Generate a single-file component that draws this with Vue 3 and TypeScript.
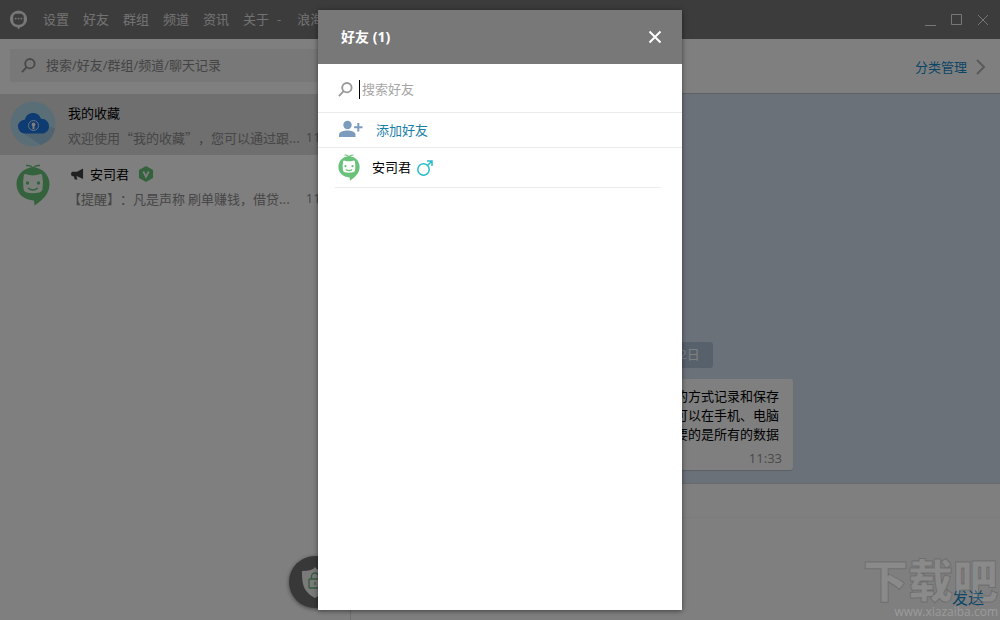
<script setup lang="ts">
import { ref } from 'vue'

interface Chat {
  id: number
  name: string
  preview: string
  time: string
  kind: 'cloud' | 'robot'
  active: boolean
}

const menu: string[] = ['设置', '好友', '群组', '频道', '资讯', '关于']
const chats: Chat[] = [
  { id: 1, name: '我的收藏', preview: '欢迎使用“我的收藏”，您可以通过跟...', time: '11:33', kind: 'cloud', active: true },
  { id: 2, name: '安司君', preview: '【提醒】：凡是声称 刷单赚钱，借贷...', time: '11:33', kind: 'robot', active: false },
]
const message: string[] = [
  '欢迎使用我的收藏，您可以通过跟自己聊天的方式记录和保存',
  '文字、图片、视频和文件等内容，并且可以在手机、电脑',
  '上随时查看，最重要的是所有的数据',
]
const friends: string[] = ['安司君']
const keyword = ref('')
const friendKeyword = ref('')
const draft = ref('')
</script>

<template>
  <div class="app">
    <header class="titlebar">
      <svg class="brand" viewBox="0 0 20 22" aria-hidden="true">
        <path fill="#f0f0f0" fill-rule="evenodd" d="M10 1a9 9 0 0 1 9 9c0 5-4 8.300-7.500 8.800L10 21l-1-2.200C4.500 18.300 1 14.600 1 10a9 9 0 0 1 9-9zM6.800 4.500 4.500 6.500v5.200c0 2.800 2.500 4.300 5.500 4.300s5.500-1.500 5.500-4.300V6.500l-2.300-2z" />
        <g fill="#f0f0f0"><circle cx="7" cy="9.500" r="1" /><circle cx="10" cy="9.500" r="1" /><circle cx="13" cy="9.500" r="1" /></g>
      </svg>
      <nav class="menu">
        <button v-for="item in menu" :key="item" type="button">{{ item }}</button>
      </nav>
      <span class="account"><span>-</span><span>浪海</span></span>
      <div class="window-buttons">
        <button type="button" aria-label="最小化"><svg viewBox="0 0 12 12"><path d="M0 11.500h11" /></svg></button>
        <button type="button" aria-label="最大化"><svg viewBox="0 0 12 12"><path d="M.5.5h10v10H.5z" /></svg></button>
        <button type="button" aria-label="关闭窗口"><svg viewBox="0 0 12 12"><path d="M1 1l10 10M11 1 1 11" /></svg></button>
      </div>
    </header>

    <div class="body">
      <aside class="sidebar">
        <div class="search-wrap">
          <label class="search">
            <svg class="lens" viewBox="0 0 16 16"><circle cx="9.500" cy="6" r="5" /><path d="M6 9.800 1 15" /></svg>
            <input v-model="keyword" type="text" placeholder="搜索/好友/群组/频道/聊天记录" aria-label="搜索" />
          </label>
        </div>
        <ul class="chats">
          <li v-for="chat in chats" :key="chat.id" :class="{ active: chat.active }">
            <svg v-if="chat.kind === 'cloud'" class="avatar" viewBox="0 0 46 46">
              <circle cx="23" cy="23" r="22.500" fill="#b5dcf0" />
              <path fill="#9fc6e0" d="M37 25.500 45.200 27A22.500 22.500 0 0 1 31 44L13 32z" />
              <path fill="#1c77e2" d="M15 32.500a6.800 6.800 0 0 1-7-7c0-4 3.300-6.700 6.800-6.800 1-4 4.200-6.700 8.300-6.700 4 0 6.800 2.300 7.900 5.800 4.800 0 8 3.200 8 7.400 0 4.300-3.200 7.300-7.300 7.300z" />
              <circle cx="23.500" cy="24.500" r="5" fill="none" stroke="#d4e9ff" stroke-width="1" />
              <path fill="#fff" d="M23.500 21.500a2 2 0 0 1 1 3.700v3h-2v-3a2 2 0 0 1 1-3.700z" />
            </svg>
            <svg v-else class="avatar robot" viewBox="0 0 34 42">
              <path fill="none" stroke="#68c578" stroke-width="1.500" d="M10 1.500q6-.5 7 4 1-4.500 7-4" />
              <path fill="#68c578" d="M17 3.500c9 0 16.500 7.200 16.500 16.500 0 8.500-5 15-15 21.500l-.5-5C7.500 36 .5 29.500.5 20 .5 10.700 8 3.500 17 3.500z" />
              <path fill="#f7fff6" d="M9.500 10q7.500 2.800 15 0c1 0 1.500.6 1.700 1.500q1.300 7 .3 13.500c-.3 2-1.500 3.100-3.200 3.500q-6.300 1.500-12.600 0c-1.700-.4-2.900-1.500-3.200-3.500q-1-6.500.3-13.500c.2-.9.700-1.500 1.700-1.500z" />
              <g fill="#68c578"><circle cx="11.500" cy="19" r="1.700" /><circle cx="22.500" cy="19" r="1.700" /></g>
              <path fill="none" stroke="#68c578" stroke-width="1.600" d="M12 24q5 4 10 0" />
            </svg>
            <div class="summary">
              <div class="name">
                <svg v-if="chat.kind === 'robot'" class="horn" viewBox="0 0 14 12"><path fill="#424242" d="M13 0v11.500L6.500 8.500H5.800L7 12H4L3 8.500H1.500Q0 8.200 0 6t1.500-2.500h5z" /></svg>
                <span>{{ chat.name }}</span>
                <svg v-if="chat.kind === 'robot'" class="badge" viewBox="0 0 16 16"><path fill="#68c578" stroke="#68c578" stroke-width="1.500" stroke-linejoin="round" d="m8 1 6.300 3.500v7L8 15l-6.300-3.500v-7z" /><path fill="none" stroke="#fff" stroke-width="1.800" d="M5.300 5.500 8 10.800l2.700-5.300" /></svg>
              </div>
              <div class="preview"><span>{{ chat.preview }}</span><time>{{ chat.time }}</time></div>
            </div>
          </li>
        </ul>
        <button class="shield" type="button" aria-label="安全锁">
          <svg viewBox="0 0 52 52">
            <path fill="#f4f4f4" d="M26 11q2 4 11 4l2 3c0 12-3 19-13 24-10-5-13-12-13-24v-3q11 0 13-4z" />
            <g fill="none" stroke="#68b879" stroke-width="1.300"><rect x="20" y="23" width="12" height="9" rx="1" /><path d="M22.500 23v-2.500a3.500 3.500 0 0 1 7 0V23M26 26v3" /></g>
          </svg>
        </button>
      </aside>

      <main class="conversation">
        <div class="topbar">
          <a href="#">分类管理</a>
          <svg viewBox="0 0 10 16"><path d="m1 1 7 7-7 7" /></svg>
        </div>
        <section class="history">
          <time class="date">8月22日</time>
          <article class="bubble">
            <p v-for="line in message" :key="line">{{ line }}</p>
            <time>11:33</time>
          </article>
        </section>
        <form class="composer" @submit.prevent>
          <div class="tools"></div>
          <textarea v-model="draft" aria-label="消息"></textarea>
          <button type="submit">发送</button>
        </form>
      </main>
    </div>

    <div class="backdrop">
      <section class="dialog" role="dialog" aria-modal="true" aria-labelledby="friends-title">
        <header>
          <h1 id="friends-title">好友 ({{ friends.length }})</h1>
          <button type="button" aria-label="关闭"><svg viewBox="0 0 14 14"><path d="m1.500 1.500 11 11M12.500 1.500l-11 11" /></svg></button>
        </header>
        <label class="find">
          <svg class="lens" viewBox="0 0 16 16"><circle cx="9.500" cy="6" r="5" /><path d="M6 9.800 1 15" /></svg>
          <span class="caret"></span>
          <input v-model="friendKeyword" type="text" placeholder="搜索好友" aria-label="搜索好友" />
        </label>
        <button class="add" type="button">
          <svg viewBox="0 0 24 18"><circle cx="8.500" cy="5" r="4.200" /><path d="M0 17v-2.200C0 11.500 5 10.500 8.500 10.500s8 1 8 4.300V17zM18.300 3h2v3.200h3.200v2h-3.200v3.200h-2V8.200h-3.200v-2h3.200z" /></svg>
          添加好友
        </button>
        <ul class="friends">
          <li v-for="friend in friends" :key="friend">
            <svg class="face" viewBox="0 0 34 42">
              <path fill="none" stroke="#68c27a" stroke-width="1.600" d="M10 1.500q6-.5 7 4 1-4.500 7-4" />
              <path fill="#68c27a" d="M17 3.500c9 0 16.500 7.200 16.500 16.500 0 8.500-5 15-15 21.500l-.5-5C7.500 36 .5 29.500.5 20 .5 10.700 8 3.500 17 3.500z" />
              <path fill="#fff" d="M9.500 10q7.500 2.800 15 0c1 0 1.500.6 1.700 1.500q1.300 7 .3 13.500c-.3 2-1.500 3.100-3.200 3.500q-6.300 1.500-12.600 0c-1.700-.4-2.900-1.500-3.200-3.500q-1-6.500.3-13.500c.2-.9.700-1.500 1.700-1.500z" />
              <g fill="#68c27a"><circle cx="11.500" cy="19" r="1.700" /><circle cx="22.500" cy="19" r="1.700" /></g>
              <path fill="none" stroke="#68c27a" stroke-width="1.800" d="M12 24q5 4 10 0" />
            </svg>
            <span>{{ friend }}</span>
            <svg class="male" viewBox="0 0 16 16"><circle cx="6.500" cy="9.500" r="5.700" /><path d="M10.500 5.500 15 1M10 1h5v5" /></svg>
          </li>
        </ul>
      </section>
    </div>

    <div class="watermark" aria-hidden="true">
      <strong>下载吧</strong>
      <span>www.xiazaiba.com</span>
    </div>
  </div>
</template>

<style>
body {
  margin: 0;
}
</style>

<style scoped>
* {
  box-sizing: border-box;
}
.app {
  position: relative;
  display: flex;
  flex-direction: column;
  min-height: 100vh;
  overflow: hidden;
  background: #fff;
  color: #000;
  font: 13px/19px "Open Sans", "Noto Sans CJK SC", sans-serif;
}
button,
input,
textarea {
  font: inherit;
  color: inherit;
  background: none;
  border: 0;
  padding: 0;
  margin: 0;
  outline: 0;
}
ul {
  list-style: none;
  margin: 0;
  padding: 0;
}
.titlebar {
  display: flex;
  align-items: center;
  height: 39px;
  padding: 0 11px 0 9px;
  background: #787878;
  color: #e4e4e4;
}
.brand {
  width: 19px;
  height: 22px;
  margin-right: 15px;
}
.menu,
.account {
  display: flex;
  gap: 14px;
}
.account {
  margin-left: 8px;
  gap: 16px;
}
.window-buttons {
  display: flex;
  gap: 14px;
  margin-left: auto;
}
.window-buttons button {
  height: 12px;
}
.window-buttons svg {
  display: block;
  width: 12px;
  height: 12px;
  fill: none;
  stroke: #eee;
}
.body {
  flex: 1;
  display: flex;
}
.sidebar {
  position: relative;
  width: 351px;
  border-right: 1px solid #dcdcdc;
}
.search-wrap {
  padding: 10px 10px 12px;
}
.search {
  display: flex;
  align-items: center;
  gap: 10px;
  height: 33px;
  padding-left: 11px;
  background: #f0f0f0;
}
.lens {
  width: 15px;
  height: 15px;
  fill: none;
  stroke: #999;
  stroke-width: 2;
}
.search input {
  flex: 1;
}
.search input::placeholder {
  color: #888;
  opacity: 1;
}
.search .lens {
  stroke: #929292;
}
.chats li {
  display: flex;
  height: 61px;
  padding: 7px 11px 0 10px;
}
.chats li.active {
  background: #dedede;
}
.avatar {
  width: 46px;
  height: 46px;
  margin-right: 12px;
}
.avatar.robot {
  height: 42px;
  margin-top: 2px;
}
.summary {
  flex: 1;
}
.name {
  display: flex;
  align-items: center;
  height: 24px;
}
.horn {
  width: 13px;
  height: 12px;
  margin: 0 6px 0 3px;
}
.badge {
  width: 16px;
  height: 16px;
  margin-left: 9px;
}
.preview {
  display: flex;
  justify-content: space-between;
  align-items: center;
  height: 25px;
  color: #8c8c8c;
  white-space: nowrap;
}
.preview span {
  font-family: "Noto Sans CJK SC", sans-serif;
  text-spacing-trim: space-all;
}
.shield {
  position: absolute;
  right: 9px;
  bottom: 12px;
  width: 52px;
  height: 52px;
  border-radius: 50%;
  background: #707070;
  box-shadow: 0 1px 4px #888;
}
.shield svg {
  display: block;
  width: 52px;
  height: 52px;
}
.conversation {
  flex: 1;
  display: flex;
  flex-direction: column;
}
.topbar {
  display: flex;
  justify-content: flex-end;
  align-items: center;
  gap: 9px;
  height: 55px;
  padding: 2px 14px 0 0;
  border-bottom: 1px solid #bcc2c9;
}
a {
  color: #168acd;
  text-decoration: none;
}
.topbar svg {
  width: 10px;
  height: 16px;
  fill: none;
  stroke: #b4b4b4;
  stroke-width: 2;
}
.history {
  flex: 1;
  display: flex;
  flex-direction: column;
  justify-content: flex-end;
  gap: 11px;
  padding: 13px 50px;
  background: #d6e2f1;
}
.date {
  align-self: center;
  padding: 3px 13px 4px;
  border-radius: 3px;
  background: #afc3d8;
  color: #fff;
}
.bubble {
  align-self: flex-start;
  display: flex;
  flex-direction: column;
  align-items: flex-end;
  width: 392px;
  padding: 8px 14px 2px;
  border-radius: 3px;
  background: #fff;
  box-shadow: 0 1px 1px #b8c3d0;
  white-space: nowrap;
}
.bubble p {
  margin: 0;
}
.bubble time {
  margin: 5px -3px 0 0;
  color: #929292;
}
.composer {
  display: flex;
  flex-direction: column;
  height: 137px;
  border-top: 1px solid #d2d2d2;
}
.tools {
  height: 34px;
  border-bottom: 1px solid #f6f6f6;
}
.composer textarea {
  flex: 1;
  resize: none;
}
.composer button {
  align-self: flex-end;
  margin: 0 16px 9px;
  color: #168acd;
  font-size: 16px;
  line-height: 26px;
}
.backdrop {
  position: absolute;
  inset: 0;
  display: flex;
  justify-content: center;
  padding: 10px;
  background: rgba(0, 0, 0, 0.5);
}
.dialog {
  width: 364px;
  background: #fff;
  box-shadow: 0 1px 5px rgba(0, 0, 0, 0.5);
}
.dialog header {
  display: flex;
  align-items: center;
  justify-content: space-between;
  height: 54px;
  padding: 0 20px 0 23px;
  background: #787878;
  color: #fff;
}
h1 {
  margin: 0;
  font-size: 14px;
  line-height: 20px;
}
.dialog header svg {
  display: block;
  width: 14px;
  height: 14px;
  fill: none;
  stroke: #fff;
  stroke-width: 2;
}
.find {
  display: flex;
  align-items: center;
  height: 49px;
  padding: 3px 20px 0;
  border-bottom: 1px solid #ebebeb;
}
.caret {
  width: 1px;
  height: 19px;
  margin: 0 2px 0 6px;
  background: #000;
}
.find input {
  flex: 1;
}
.find input::placeholder {
  color: #a6a6a6;
  opacity: 1;
}
.add {
  display: flex;
  align-items: center;
  gap: 13px;
  width: 100%;
  height: 35px;
  padding: 0 20px 0 21px;
  border-bottom: 1px solid #ebebeb;
  color: #1b7fa8;
}
.add svg {
  width: 24px;
  height: 18px;
  margin-bottom: 2px;
  fill: #7b9cbd;
}
.friends {
  padding: 0 21px 0 17px;
}
.friends li {
  display: flex;
  align-items: center;
  height: 40px;
  padding-left: 3px;
  border-bottom: 1px solid #ebebeb;
}
.face {
  width: 22px;
  height: 27px;
  margin-right: 12px;
}
.male {
  width: 16px;
  height: 16px;
  margin-left: 6px;
  fill: none;
  stroke: #28bcc9;
  stroke-width: 1.500;
}
.watermark {
  position: absolute;
  right: 2px;
  bottom: 0;
  display: flex;
  flex-direction: column;
  align-items: flex-end;
  pointer-events: none;
}
.watermark strong {
  color: rgba(200, 200, 200, 0.18);
  font-size: 45px;
  line-height: 46px;
  font-weight: 900;
  -webkit-text-stroke: 1px rgba(70, 70, 70, 0.35);
}
.watermark span {
  font-size: 12px;
  line-height: 16px;
  color: rgba(200, 200, 200, 0.4);
}
</style>
